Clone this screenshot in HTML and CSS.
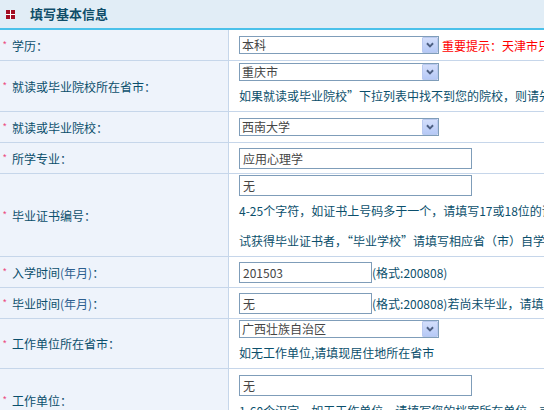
FILE: index.html
```html
<!DOCTYPE html>
<html lang="zh-CN">
<head>
<meta charset="utf-8">
<title>填写基本信息</title>
<link rel="stylesheet" href="styles.css">
</head>
<body>
<div class="page">
  <div class="title">
    <span class="icon"><i></i><i></i><i></i><i></i></span>
    <h2>填写基本信息</h2>
  </div>
  <div class="form">
    <div class="row">
      <div class="label"><span class="req">*</span>学历：</div>
      <div class="field">
        <div class="inline">
          <div class="select"><span class="val">本科</span><span class="btn"><svg viewBox="0 0 16 16" width="16" height="16"><path d="M4.5 6 L8 9.5 L11.5 6" fill="none" stroke="#4d5f82" stroke-width="2.2"/></svg></span></div>
          <span class="warn">重要提示：天津市只接受天津市户籍考生报名</span>
        </div>
      </div>
    </div>
    <div class="row">
      <div class="label"><span class="req">*</span>就读或毕业院校所在省市：</div>
      <div class="field top2">
        <div class="select"><span class="val">重庆市</span><span class="btn"><svg viewBox="0 0 16 16" width="16" height="16"><path d="M4.5 6 L8 9.5 L11.5 6" fill="none" stroke="#4d5f82" stroke-width="2.2"/></svg></span></div>
        <p class="help">如果就读或毕业院校”下拉列表中找不到您的院校，则请先选择“其他”</p>
      </div>
    </div>
    <div class="row">
      <div class="label"><span class="req">*</span>就读或毕业院校：</div>
      <div class="field">
        <div class="select"><span class="val">西南大学</span><span class="btn"><svg viewBox="0 0 16 16" width="16" height="16"><path d="M4.5 6 L8 9.5 L11.5 6" fill="none" stroke="#4d5f82" stroke-width="2.2"/></svg></span></div>
      </div>
    </div>
    <div class="row">
      <div class="label"><span class="req">*</span>所学专业：</div>
      <div class="field">
        <div class="input">应用心理学</div>
      </div>
    </div>
    <div class="row">
      <div class="label"><span class="req">*</span>毕业证书编号：</div>
      <div class="field top1">
        <div class="input">无</div>
        <p class="help">4-25个字符，如证书上号码多于一个，请填写17或18位的证书编号；通过自学考</p>
        <p class="help">试获得毕业证书者，“毕业学校”请填写相应省（市）自学考试委员会</p>
      </div>
    </div>
    <div class="row">
      <div class="label"><span class="req">*</span>入学时间<span class="paren">(年月)</span>：</div>
      <div class="field">
        <div class="inline"><div class="input short">201503</div><span class="fmt">(格式:200808)</span></div>
      </div>
    </div>
    <div class="row">
      <div class="label"><span class="req">*</span>毕业时间<span class="paren">(年月)</span>：</div>
      <div class="field">
        <div class="inline"><div class="input short">无</div><span class="fmt">(格式:200808)若尚未毕业，请填写预计毕业时间</span></div>
      </div>
    </div>
    <div class="row">
      <div class="label"><span class="req">*</span>工作单位所在省市：</div>
      <div class="field top1">
        <div class="select"><span class="val">广西壮族自治区</span><span class="btn"><svg viewBox="0 0 16 16" width="16" height="16"><path d="M4.5 6 L8 9.5 L11.5 6" fill="none" stroke="#4d5f82" stroke-width="2.2"/></svg></span></div>
        <p class="help">如无工作单位,请填现居住地所在省市</p>
      </div>
    </div>
    <div class="row">
      <div class="label"><span class="req">*</span>工作单位：</div>
      <div class="field top6 last">
        <div class="input">无</div>
        <p class="help">1-60个汉字，如无工作单位，请填写您的档案所在单位，或现居住地所在街道</p>
      </div>
    </div>
  </div>
</div>
</body>
</html>
```
FILE: styles.css
```css
html, body {
  margin: 0;
  padding: 0;
  background: #ffffff;
}
body {
  font-family: "Noto Sans CJK SC", "Liberation Sans", sans-serif;
  font-size: 12px;
  color: #0b4f6c;
}
.page {
  width: 544px;
  overflow: hidden;
}
.title {
  height: 28px;
  background: #e1edf6;
  border-bottom: 2px solid #4ac1ea;
  display: flex;
  align-items: center;
}
.icon {
  width: 9px;
  height: 9px;
  margin-left: 6px;
  margin-top: 1px;
  display: grid;
  grid-template-columns: 4px 4px;
  grid-template-rows: 4px 4px;
  gap: 1px;
  background: #ffffff;
}
.icon i {
  background: #a30d22;
}
.title h2 {
  margin: 0 0 0 15px;
  font-size: 13px;
  font-weight: bold;
  color: #0f4d69;
  line-height: 28px;
}
.row {
  display: grid;
  grid-template-columns: 229px 1fr;
  border-bottom: 1px solid #c6d6ea;
}
.label {
  background: #eef3fb;
  border-right: 1px solid #c6d6ea;
  display: flex;
  align-items: center;
  padding-left: 3px;
  white-space: nowrap;
}
.req {
  color: #ec3a76;
  font-size: 9px;
  width: 9px;
  position: relative;
  top: -1px;
  font-family: "Liberation Sans", sans-serif;
}
.field {
  min-height: 30px;
  display: flex;
  flex-direction: column;
  justify-content: center;
  align-items: flex-start;
  padding-left: 10px;
  white-space: nowrap;
}
.field.top1 {
  justify-content: flex-start;
  padding-top: 1px;
}
.field.top2 {
  justify-content: flex-start;
  padding-top: 2px;
}
.field.top6 {
  justify-content: flex-start;
  padding-top: 6px;
}
.field.last {
  padding-bottom: 5px;
}
.inline {
  display: flex;
  align-items: center;
}
.select {
  width: 200px;
  height: 18px;
  border: 1px solid #7f9db9;
  box-sizing: border-box;
  display: flex;
  align-items: center;
  justify-content: space-between;
  background: #fff;
}
.select .val {
  color: #454545;
  padding-left: 2px;
  line-height: 16px;
}
.btn {
  width: 16px;
  height: 16px;
  box-sizing: border-box;
  border: 1px solid #b9c9ef;
  border-radius: 1px;
  background: linear-gradient(#d3defb, #b6c9f6);
  display: flex;
}
.btn svg {
  width: 14px;
  height: 14px;
}
.warn {
  color: #ff0000;
  margin-left: 3px;
}
.input {
  width: 233px;
  height: 21px;
  border: 1px solid #7f9db9;
  box-sizing: border-box;
  color: #454545;
  padding-left: 3px;
  line-height: 19px;
  background: #fff;
}
.input.short {
  width: 133px;
}
.fmt {
  color: #0b4f6c;
}
.paren {
  color: #2d5e8f;
}
.help {
  margin: 0;
  line-height: 30px;
  color: #0b4f6c;
}
```
